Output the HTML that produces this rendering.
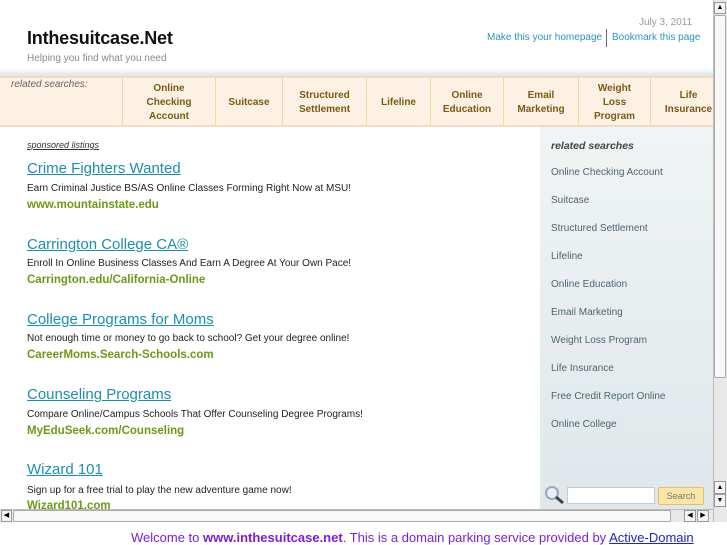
<!DOCTYPE html>
<html><head><style>
*{margin:0;padding:0;box-sizing:border-box}
body{width:727px;height:545px;overflow:hidden;background:#fff;font-family:"Liberation Sans",sans-serif;position:relative}
.a{position:absolute}
.nav{left:0;top:76px;width:713px;height:51px;background:#fdf1e4;border-top:2px solid #f0dcc0;border-bottom:2px solid #f0dcc0}
.nav .c{position:absolute;top:0;height:49px;border-left:1px solid #f0d8a8;display:flex;align-items:center;justify-content:center;text-align:center;font-size:10px;font-weight:bold;color:#7a5a14;line-height:14px}
.side{left:540px;top:127px;width:173px;height:382px;background:linear-gradient(#f0f4f5,#dfe7ea)}
.side div{position:absolute;left:11px;font-size:10px;color:#4e6470;width:162px}
.t{font-size:15px;color:#1a8fb0;text-decoration:underline;left:27px}
.d{font-size:10px;color:#222;left:27px}
.u{font-size:11.5px;color:#6b9a14;font-weight:bold;left:27px}
</style></head><body>
<div class="a" style="left:0;top:68px;width:713px;height:8px;background:linear-gradient(#fff,#dde3e8)"></div>
<div class="a" style="left:639px;top:17px;font-size:10px;color:#999">July 3, 2011</div>
<div class="a" style="left:487px;top:32px;font-size:10px;color:#2a95b8">Make this your homepage</div>
<div class="a" style="left:606px;top:29px;width:1px;height:18px;background:#666"></div>
<div class="a" style="left:612px;top:32px;font-size:10px;color:#2a95b8">Bookmark this page</div>
<div class="a" style="left:27px;top:28px;font-size:18px;font-weight:bold;color:#111;letter-spacing:-0.2px">Inthesuitcase.Net</div>
<div class="a" style="left:27px;top:53px;font-size:10px;color:#888">Helping you find what you need</div>
<div class="a nav">
<div class="a" style="left:11px;top:1px;font-size:10px;font-style:italic;color:#666">related searches:</div>
<div class="c" style="left:122px;width:93px">Online<br>Checking<br>Account</div>
<div class="c" style="left:215px;width:67px">Suitcase</div>
<div class="c" style="left:282px;width:84px">Structured<br>Settlement</div>
<div class="c" style="left:366px;width:64px">Lifeline</div>
<div class="c" style="left:430px;width:73px">Online<br>Education</div>
<div class="c" style="left:503px;width:75px">Email<br>Marketing</div>
<div class="c" style="left:578px;width:72px">Weight<br>Loss<br>Program</div>
<div class="c" style="left:650px;width:76px">Life<br>Insurance</div>
</div>
<div class="a side">
<div style="top:13px;font-weight:bold;font-style:italic;color:#444;font-size:10.5px">related searches</div>
<div style="top:40px">Online Checking Account</div>
<div style="top:68px">Suitcase</div>
<div style="top:96px">Structured Settlement</div>
<div style="top:124px">Lifeline</div>
<div style="top:152px">Online Education</div>
<div style="top:180px">Email Marketing</div>
<div style="top:208px">Weight Loss Program</div>
<div style="top:236px">Life Insurance</div>
<div style="top:264px">Free Credit Report Online</div>
<div style="top:292px">Online College</div>
</div>
<svg class="a" style="left:544px;top:485px" width="22" height="20"><circle cx="8" cy="8" r="6" fill="#eef" stroke="#9ab" stroke-width="2"/><line x1="12" y1="12" x2="19" y2="18" stroke="#444" stroke-width="3"/></svg>
<div class="a" style="left:567px;top:487px;width:88px;height:17px;background:#fff;border:1px solid #bcd"></div>
<div class="a" style="left:658px;top:487px;width:46px;height:18px;background:#fbe6a8;border:1px solid #e0c070;border-radius:2px;font-size:9px;color:#777;text-align:center;line-height:16px">Search</div>
<div class="a" style="left:27px;top:140px;font-size:9px;font-style:italic;color:#333;text-decoration:underline">sponsored listings</div>
<div class="a t" style="top:160px">Crime Fighters Wanted</div>
<div class="a d" style="top:183px">Earn Criminal Justice BS/AS Online Classes Forming Right Now at MSU!</div>
<div class="a u" style="top:199px">www.mountainstate.edu</div>
<div class="a t" style="top:236px">Carrington College CA®</div>
<div class="a d" style="top:258px">Enroll In Online Business Classes And Earn A Degree At Your Own Pace!</div>
<div class="a u" style="top:274px">Carrington.edu/California-Online</div>
<div class="a t" style="top:311px">College Programs for Moms</div>
<div class="a d" style="top:333px">Not enough time or money to go back to school? Get your degree online!</div>
<div class="a u" style="top:349px">CareerMoms.Search-Schools.com</div>
<div class="a t" style="top:386px">Counseling Programs</div>
<div class="a d" style="top:409px">Compare Online/Campus Schools That Offer Counseling Degree Programs!</div>
<div class="a u" style="top:425px">MyEduSeek.com/Counseling</div>
<div class="a t" style="top:461px">Wizard 101</div>
<div class="a d" style="top:485px">Sign up for a free trial to play the new adventure game now!</div>
<div class="a u" style="top:500px;height:9px;overflow:hidden">Wizard101.com</div>
<div class="a" style="left:713px;top:0;width:14px;height:522px;background:#e8e8e8;border-left:1px solid #bbb"></div>
<div class="a" style="left:714px;top:2px;width:12px;height:12px;background:#f4f4f4;border:1px solid #999;font-size:7px;text-align:center;line-height:10px">▲</div>
<div class="a" style="left:714px;top:15px;width:12px;height:363px;background:#f8f8f8;border:1px solid #aaa;border-radius:2px"></div>
<div class="a" style="left:714px;top:481px;width:12px;height:13px;background:#f4f4f4;border:1px solid #999;font-size:7px;text-align:center;line-height:11px">▲</div>
<div class="a" style="left:714px;top:494px;width:12px;height:13px;background:#f4f4f4;border:1px solid #999;font-size:7px;text-align:center;line-height:11px">▼</div>
<div class="a" style="left:0;top:509px;width:713px;height:13px;background:#e8e8e8;border-top:1px solid #bbb"></div>
<div class="a" style="left:1px;top:510px;width:11px;height:12px;background:#f4f4f4;border:1px solid #999;font-size:7px;text-align:center;line-height:10px">◀</div>
<div class="a" style="left:13px;top:510px;width:658px;height:12px;background:#f8f8f8;border:1px solid #aaa;border-radius:2px"></div>
<div class="a" style="left:684px;top:510px;width:12px;height:12px;background:#f4f4f4;border:1px solid #999;font-size:7px;text-align:center;line-height:10px">◀</div>
<div class="a" style="left:697px;top:510px;width:12px;height:12px;background:#f4f4f4;border:1px solid #999;font-size:7px;text-align:center;line-height:10px">▶</div>
<div class="a" style="left:131px;top:530px;font-size:13px;color:#7a1ee0;white-space:nowrap">Welcome to <b>www.inthesuitcase.net</b>. This is a domain parking service provided by <span style="text-decoration:underline;color:#2222cc">Active-Domain</span></div>
</body></html>
